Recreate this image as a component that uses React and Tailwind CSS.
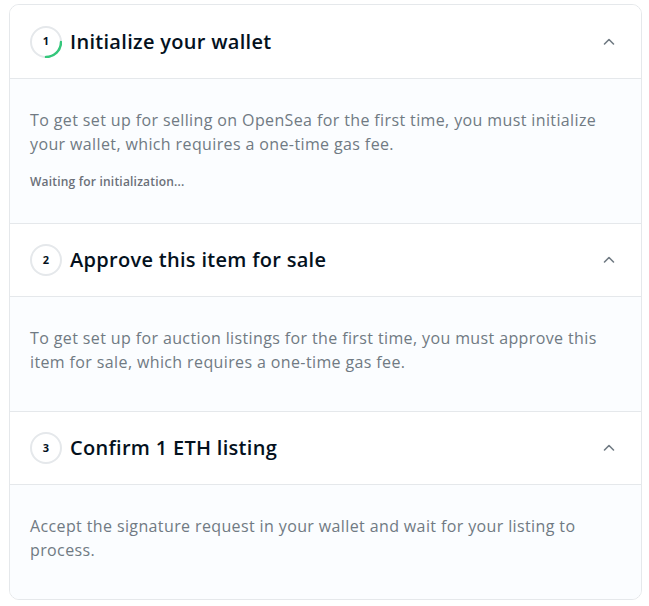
import React from 'react';

const steps = [
  {
    n: 1,
    title: 'Initialize your wallet',
    body: 'To get set up for selling on OpenSea for the first time, you must initialize your wallet, which requires a one-time gas fee.',
    status: 'Waiting for initialization...',
    active: true,
  },
  {
    n: 2,
    title: 'Approve this item for sale',
    body: 'To get set up for auction listings for the first time, you must approve this item for sale, which requires a one-time gas fee.',
  },
  {
    n: 3,
    title: 'Confirm 1 ETH listing',
    body: 'Accept the signature request in your wallet and wait for your listing to process.',
  },
];

function StepBadge({ n, active }) {
  return (
    <div className="relative w-8 h-8 shrink-0">
      <svg className="absolute inset-0" width="32" height="32" viewBox="0 0 32 32">
        <circle cx="16" cy="16" r="15" fill="white" stroke="#e5e8eb" strokeWidth="2" />
        {active && (
          <path d="M31 16 A15 15 0 0 1 16 31" fill="none" stroke="#34c77b" strokeWidth="2.5" strokeLinecap="round" />
        )}
      </svg>
      <span className="absolute inset-0 flex items-center justify-center text-[11px] font-bold text-[#04111d]">{n}</span>
    </div>
  );
}

function Chevron() {
  return (
    <svg width="14" height="14" viewBox="0 0 14 14" fill="none">
      <path d="M2.5 9 L7 4.5 L11.5 9" stroke="#707a83" strokeWidth="1.6" strokeLinecap="round" strokeLinejoin="round" />
    </svg>
  );
}

export default function App() {
  return (
    <div className="w-[649px] h-[606px] bg-white pt-1 pl-[9px]" style={{ fontFamily: '"Open Sans", sans-serif' }}>
      <div className="w-[633px] border border-[#e5e8eb] rounded-[10px] overflow-hidden">
        {steps.map((s, i) => (
          <div key={s.n} className={i > 0 ? 'border-t border-[#e5e8eb]' : ''}>
            <div className={`${i === 0 ? 'h-[74px]' : 'h-[73px]'} flex items-center px-5 border-b border-[#e5e8eb] bg-white`}>
              <StepBadge n={s.n} active={s.active} />
              <h3 className="ml-[8px] text-[20px] font-semibold text-[#04111d] tracking-[0.3px]">{s.title}</h3>
              <div className="ml-auto mr-[5px]">
                <Chevron />
              </div>
            </div>
            <div className={`bg-[#fbfdff] px-5 pt-[29px] ${s.status ? 'pb-[32px]' : 'pb-[37px]'}`}>
              <p className="text-[16px] leading-6 text-[#707a83] tracking-[0.38px]">{s.body}</p>
              {s.status && (
                <p className="mt-[17px] text-[12px] leading-[18px] font-semibold text-[#6b7079] tracking-[0.2px]">{s.status}</p>
              )}
            </div>
          </div>
        ))}
      </div>
    </div>
  );
}
